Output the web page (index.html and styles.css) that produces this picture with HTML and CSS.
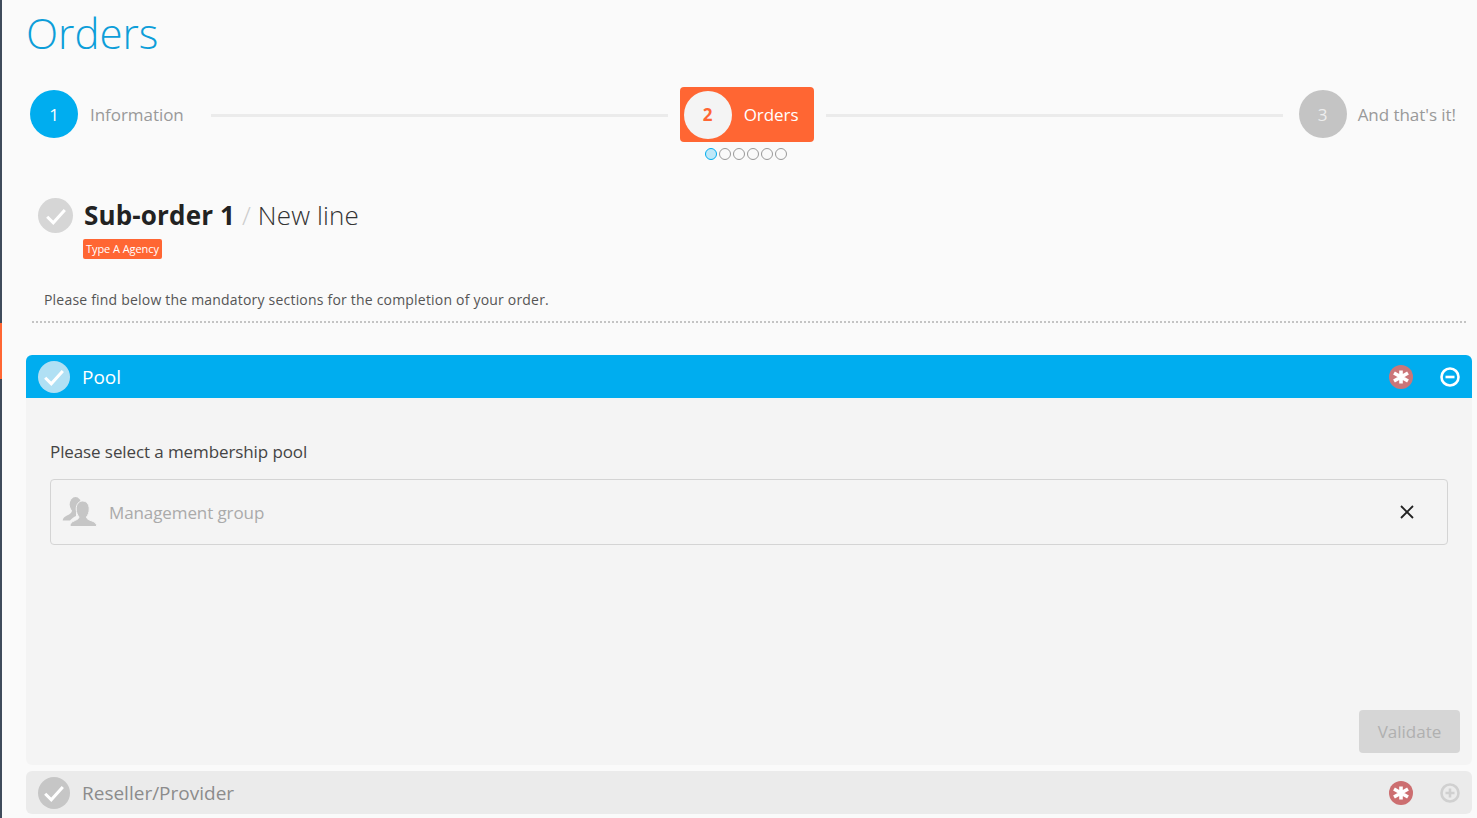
FILE: index.html
```html
<!DOCTYPE html>
<html lang="en">
<head>
    <meta charset="UTF-8">
    <title>Orders</title>
    <link rel="stylesheet" href="styles.css">
</head>
<body>
    <div id="sidebar"><div id="sidebarMark"></div></div>
    <div id="main">
        <h1 id="pageTitle">Orders</h1>

        <div id="steps">
            <div class="step">
                <span class="stepNumber stepDone">1</span>
                <span class="stepLabel">Information</span>
            </div>
            <div class="stepLine"></div>
            <div class="stepCurrentWrap">
                <div class="stepCurrent">
                    <span class="stepNumber">2</span>
                    <span class="stepLabel">Orders</span>
                </div>
                <div class="dots">
                    <span class="dot dotActive"></span>
                    <span class="dot"></span>
                    <span class="dot"></span>
                    <span class="dot"></span>
                    <span class="dot"></span>
                    <span class="dot"></span>
                </div>
            </div>
            <div class="stepLine"></div>
            <div class="step stepLast">
                <span class="stepNumber stepTodo">3</span>
                <span class="stepLabel">And that's it!</span>
            </div>
        </div>

        <div id="subOrder">
            <span class="check checkLarge">
                <svg viewBox="0 0 20 20"><path d="M4.5 10.5l3.8 3.8 7.200-8" /></svg>
            </span>
            <div>
                <h2 id="subOrderTitle"><b>Sub-order 1</b> <span class="slash">/</span> New line</h2>
                <span id="tag">Type A Agency</span>
            </div>
        </div>

        <p id="intro">Please find below the mandatory sections for the completion of your order.</p>

        <section class="panel">
            <header class="panelHead panelHeadOpen">
                <span class="check checkOpen">
                    <svg viewBox="0 0 20 20"><path d="M4.5 10.5l3.8 3.8 7.200-8" /></svg>
                </span>
                <span class="panelTitle">Pool</span>
                <svg class="required" viewBox="0 0 24 24"><circle cx="12" cy="12" r="12" /><path d="M12 5.500v13M5 8l14 8M19 8l-14 8" /></svg>
                <svg class="toggle" viewBox="0 0 20 20"><circle cx="10" cy="10" r="8.500" /><path d="M5.500 10h9" /></svg>
            </header>
            <div class="panelBody">
                <p class="fieldLabel">Please select a membership pool</p>
                <div class="field">
                    <svg class="fieldIcon" viewBox="0 0 36 30">
                        <ellipse cx="13.500" cy="7.500" rx="5.800" ry="7.500" />
                        <path d="M10 13C10 16 8 17 5 18.500 2.500 19.700 1 21 .7 23.500L8 23.500C10 21 12 20 14 19L14 13z" />
                        <path class="fieldIconFront" d="M20.700 4C17 4 14.200 7 14.200 12 14.200 15.500 15.500 18 17 20 17 22 14 23 12 24 9.500 25 8 26.500 8 29.500L34.700 29.500C34.700 26.500 33 25 30 24 27 23 24.500 22 24.500 20 26 18 27.200 15.500 27.200 12 27.200 7 24.400 4 20.700 4z" />
                    </svg>
                    <span class="fieldValue">Management group</span>
                    <svg class="fieldClear" viewBox="0 0 14 14"><path d="M1 1l12 12M13 1L1 13" /></svg>
                </div>
                <div class="panelActions">
                    <button id="validate" disabled>Validate</button>
                </div>
            </div>
        </section>

        <section class="panel">
            <header class="panelHead panelHeadClosed">
                <span class="check checkClosed">
                    <svg viewBox="0 0 20 20"><path d="M4.500 10.500l3.800 3.800 7.200-8" /></svg>
                </span>
                <span class="panelTitle">Reseller/Provider</span>
                <svg class="required requiredClosed" viewBox="0 0 24 24"><circle cx="12" cy="12" r="12" /><path d="M12 5.500v13M5 8l14 8M19 8l-14 8" /></svg>
                <svg class="toggle" viewBox="0 0 20 20"><circle cx="10" cy="10" r="8.500" /><path d="M5.500 10h9M10 5.500v9" /></svg>
            </header>
        </section>
    </div>
</body>
</html>
```

FILE: styles.css
```css
html, body {
    height: 100%;
}

body {
    font-family: "Open Sans", sans-serif;
    background-color: #fafafa;
    margin: 0;
    display: flex;
    overflow: hidden;
}

#sidebar {
    width: 2px;
    flex: none;
    background-color: #3f4b5b;
    padding-top: 323px;
}

#sidebarMark {
    height: 56px;
    background-color: #ff6633;
}

#main {
    flex: 1;
    min-width: 0;
    padding: 0 5px 0 24px;
}

#pageTitle {
    font-size: 42px;
    font-weight: 300;
    line-height: 58px;
    color: #0d9ed9;
    margin: 4px 0 0 0;
}

#steps {
    display: flex;
    align-items: flex-start;
    margin: 28px 16px 0 4px;
}

.step {
    display: flex;
    align-items: center;
    gap: 12px;
    height: 48px;
    flex: none;
}

.stepLast {
    gap: 11px;
}

.stepNumber {
    width: 48px;
    height: 48px;
    border-radius: 50%;
    display: flex;
    align-items: center;
    justify-content: center;
    font-size: 17px;
    flex: none;
}

.stepDone {
    background-color: #00adef;
    color: #fff;
}

.stepTodo {
    background-color: #c4c4c4;
    color: #eee;
}

.stepLabel {
    font-size: 17px;
    letter-spacing: -0.05px;
    color: #999;
}

.stepLine {
    flex: 1;
    height: 3px;
    background-color: #ebebeb;
    margin: 24px 12px 0 27px;
}

.stepCurrentWrap + .stepLine {
    margin: 24px 16px 0 12px;
}

.stepCurrentWrap {
    flex: none;
    margin-top: -3px;
}

.stepCurrent {
    width: 134px;
    height: 55px;
    box-sizing: border-box;
    background-color: #ff6633;
    border-radius: 4px;
    padding: 3px 4px;
    display: flex;
    align-items: center;
    gap: 12px;
}

.stepCurrent .stepNumber {
    background-color: #f4f4f4;
    color: #ff6633;
    font-weight: 700;
}

.stepCurrent .stepLabel {
    color: #fff;
}

.dots {
    display: flex;
    gap: 2px;
    margin: 6px 0 0 25px;
}

.dot {
    width: 12px;
    height: 12px;
    box-sizing: border-box;
    border: 1px solid #999;
    border-radius: 50%;
}

.dotActive {
    border-color: #00adef;
    background-color: #bfe8f8;
}

#subOrder {
    display: flex;
    gap: 11px;
    margin: 38px 0 0 12px;
}

.check {
    display: flex;
    align-items: center;
    justify-content: center;
    border-radius: 50%;
    flex: none;
}

.check svg {
    width: 32px;
    height: 32px;
    fill: none;
    stroke: #fff;
    stroke-width: 1.9;
}

.checkLarge {
    width: 35px;
    height: 35px;
    background-color: #d6d6d6;
}

#subOrderTitle {
    font-size: 26px;
    font-weight: 300;
    line-height: 34px;
    letter-spacing: 0.15px;
    color: #333;
    margin: 0;
}

#subOrderTitle b {
    font-weight: 700;
    color: #222;
}

.slash {
    color: #ccc;
}

#tag {
    display: block;
    width: fit-content;
    margin: 7px 0 0 -1px;
    padding: 0 3px;
    font-size: 11px;
    line-height: 20px;
    letter-spacing: -0.07px;
    color: #fff;
    background-color: #ff6633;
    border-radius: 2px;
}

#intro {
    font-size: 14px;
    line-height: 20px;
    letter-spacing: 0.2px;
    color: #555;
    margin: 31px 6px 0 6px;
    padding: 0 0 11px 12px;
    border-bottom: 2px dotted #c4c4c4;
}

.panel {
    margin-bottom: 6px;
}

#intro + .panel {
    margin-top: 32px;
}

.panelHead {
    height: 43px;
    display: flex;
    align-items: center;
    padding: 0 12px;
}

.panelHeadOpen {
    background-color: #00adef;
    border-radius: 6px 6px 0 0;
    color: #fff;
}

.panelHeadClosed {
    background-color: #ebebeb;
    border-radius: 6px;
    color: #8c8c8c;
}

.checkOpen, .checkClosed {
    width: 32px;
    height: 32px;
}

.checkOpen {
    background-color: #b0e0f4;
}

.checkClosed {
    background-color: #c6c6c6;
}

.panelTitle {
    font-size: 19px;
    margin-left: 12px;
    flex: 1;
}

.required {
    width: 24px;
    height: 24px;
    flex: none;
    fill: #cb7679;
    stroke: none;
}

.required path {
    fill: none;
    stroke: #fff;
    stroke-width: 3.6;
}

.requiredClosed {
    fill: #cc6e70;
}

.toggle {
    width: 20px;
    height: 20px;
    margin-left: 27px;
    fill: none;
    stroke: #fff;
    stroke-width: 2.6;
}

.panelHeadClosed .toggle {
    stroke: #d0d0d0;
}

.panelBody {
    background-color: #f4f4f4;
    border-radius: 0 0 6px 6px;
    height: 367px;
    box-sizing: border-box;
    padding: 42px 12px 12px 24px;
    display: flex;
    flex-direction: column;
}

.fieldLabel {
    font-size: 17px;
    line-height: 24px;
    letter-spacing: -0.1px;
    color: #444;
    margin: 0 0 15px 0;
}

.field {
    height: 66px;
    box-sizing: border-box;
    margin-right: 12px;
    border: 1px solid #d4d4d4;
    border-radius: 4px;
    padding: 0 33px 0 11px;
    display: flex;
    align-items: center;
}

.fieldIcon {
    width: 36px;
    height: 30px;
    fill: #c6c6c6;
    margin-right: 11px;
}

.fieldIconFront {
    stroke: #f4f4f4;
    stroke-width: 1;
}

.fieldValue {
    font-size: 17px;
    letter-spacing: -0.1px;
    color: #aaa;
    flex: 1;
}

.fieldClear {
    width: 14px;
    height: 14px;
    fill: none;
    stroke: #222;
    stroke-width: 1.8;
}

.panelActions {
    margin-top: auto;
    display: flex;
    justify-content: flex-end;
}

#validate {
    width: 101px;
    height: 43px;
    font-family: inherit;
    font-size: 17px;
    color: #b0b0b0;
    background-color: #d6d6d6;
    border: none;
    border-radius: 4px;
}
```
